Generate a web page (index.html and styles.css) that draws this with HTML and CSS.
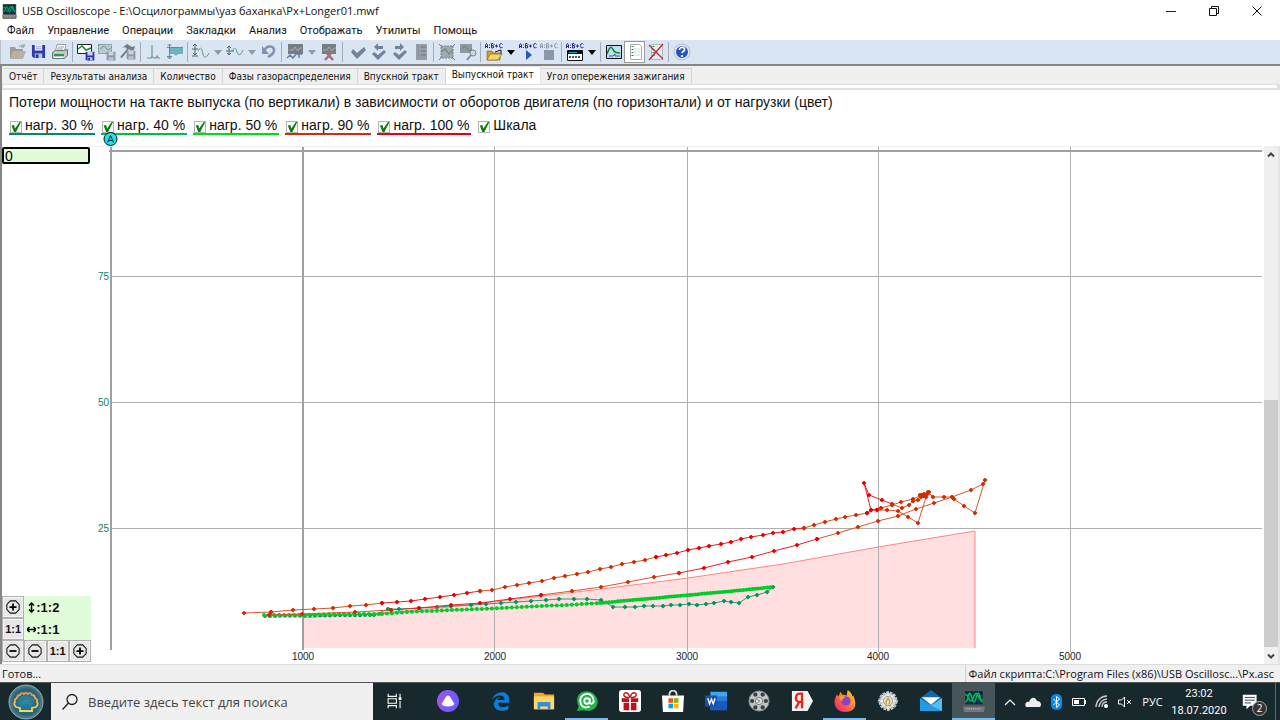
FILE: index.html
```html
<!DOCTYPE html>
<html lang="ru">
<head>
<meta charset="utf-8">
<title>USB Oscilloscope</title>
<link rel="stylesheet" href="styles.css">
</head>
<body>
<svg class="defs" width="0" height="0" aria-hidden="true">
  <symbol id="scope" viewBox="0 0 20 20">
    <path d="M1 0h18v15H1z" fill="#555"/><path d="M2 1h16v12H2z" fill="#03254c"/>
    <path d="M2 5h16M2 9h16M6 1v12M10 1v12M14 1v12" stroke="#24577b" stroke-width=".5"/>
    <path d="M2 11c3 0 2-8 4-8s2 8 4 8 2-8 4-8 1 8 4 8M2 4c3 0 3 6 5 6s3-7 5-7 2 7 6 6" fill="none" stroke="#00c34e" stroke-width="1.300"/>
    <path d="M0 15h20l-1 5H1z" fill="#777"/><path d="M3 17h14" stroke="#ccc" stroke-dasharray="1 1"/>
  </symbol>
  <symbol id="disk" viewBox="0 0 16 16">
    <path d="M1 1h14v14H3l-2-2z" fill="#2d3aa8"/><path d="M4 1h8v6H4z" fill="#e9efff"/><path d="M4 10h8v5H4z" fill="#b9c1e8"/><path d="M5 11h3v4H5z" fill="#2d3aa8"/><path d="M5 3h6M5 5h6" stroke="#9aa6dc"/>
  </symbol>
  <symbol id="disk-off" viewBox="0 0 16 16">
    <path d="M1 1h14v14H3l-2-2z" fill="#8e96a6"/><path d="M4 1h8v6H4z" fill="#ccd3df"/><path d="M4 10h8v5H4z" fill="#b9c1ce"/>
  </symbol>
  <symbol id="abc" viewBox="0 0 18 6">
    <path d="M.5 5V2l1-1.500 1 1.500v3M1 3.500h1.500M4.500 1.500v1M4.500 4v1M6.500.5v4.500h1.500l1-1-1-1.500 1-1-1-1H6.500M7 2.700h1.500M10 3h3M11.500 1.500v3M17.500 1.500l-1-1-1.500.5-.5 1.500.5 2 1.500.5 1-1" fill="none" stroke="currentColor"/>
  </symbol>
  <symbol id="plus" viewBox="0 0 16 16"><path d="M5 1h6l4 4v6l-4 4H5l-4-4V5z" fill="none" stroke="#111" stroke-width="1.200"/><path d="M4 8h8M8 4v8" stroke="#000" stroke-width="2"/></symbol>
  <symbol id="minus" viewBox="0 0 16 16"><path d="M5 1h6l4 4v6l-4 4H5l-4-4V5z" fill="none" stroke="#111" stroke-width="1.200"/><path d="M4 8h8" stroke="#000" stroke-width="2"/></symbol>
  <marker id="dot-orange" viewBox="0 0 6 6" refX="3" refY="3" markerWidth="5" markerHeight="5" markerUnits="userSpaceOnUse"><path d="M3 0l3 3-3 3-3-3z" fill="#d02c00"/></marker>
  <marker id="dot-red" viewBox="0 0 6 6" refX="3" refY="3" markerWidth="5" markerHeight="5" markerUnits="userSpaceOnUse"><path d="M3 0l3 3-3 3-3-3z" fill="#ea0000"/></marker>
  <marker id="dot-teal" viewBox="0 0 6 6" refX="3" refY="3" markerWidth="5" markerHeight="5" markerUnits="userSpaceOnUse"><path d="M3 0l3 3-3 3-3-3z" fill="#00965f"/></marker>
</svg>

<div class="window">
  <header class="titlebar">
    <svg class="app-icon" viewBox="0 0 20 20"><use href="#scope"/></svg>
    <h1 class="title">USB Oscilloscope - E:\Осцилограммы\уаз баханка\Px+Longer01.mwf</h1>
    <div class="window-buttons">
      <button aria-label="Свернуть"><svg viewBox="0 0 12 12"><path d="M1 6.500h10" stroke="#222"/></svg></button>
      <button aria-label="Восстановить"><svg viewBox="0 0 12 12"><path d="M1.500 3.500h7v7h-7zM3.500 3.500v-2h7v7h-2" fill="none" stroke="#111"/></svg></button>
      <button aria-label="Закрыть"><svg viewBox="0 0 12 12"><path d="M1.500 1.500l9 9M10.500 1.500l-9 9" stroke="#111"/></svg></button>
    </div>
  </header>

  <nav class="menu">
    <button>Файл</button><button>Управление</button><button>Операции</button><button>Закладки</button><button>Анализ</button><button>Отображать</button><button>Утилиты</button><button>Помощь</button>
  </nav>

  <div class="toolbar" role="toolbar">
    <button class="tool" aria-label="Открыть"><svg viewBox="0 0 18 18"><path d="M1 4h5l1 2h7v10H1z" fill="#a19c92"/><path d="M4 8h13l-3 8H1z" fill="#b7b1a6"/><path d="M10 4c2-3 4-2 5 0m0-3v3h-3" fill="none" stroke="#8a8f99"/></svg></button>
    <button class="tool" aria-label="Сохранить"><svg viewBox="0 0 18 18"><use href="#disk" x="1" y="1" width="15" height="15"/></svg></button>
    <button class="tool" aria-label="Печать"><svg viewBox="0 0 18 18"><path d="M6 1.500h9l-2 8H4z" fill="#fff" stroke="#99a"/><path d="M1.500 9.500l3-2h9l3-1v6l-3 3h-12z" fill="#c3c7c9" stroke="#6b747c"/><path d="M3 12h10" stroke="#2d9a3b" stroke-width="2"/><path d="M3 14.500h9" stroke="#fff"/><path d="M7 4h6M6 6h6" stroke="#8aa"/></svg></button>
    <span class="sep"></span>
    <button class="tool" aria-label="Сохранить участок"><svg viewBox="0 0 18 18"><path d="M.5 1.500h14v9H.5z" fill="#fff" stroke="#222"/><path d="M1 6l4-3 4 4 5-2" fill="none" stroke="#16883a" stroke-width="1.500"/><use href="#disk" x="8" y="8" width="10" height="10"/></svg></button>
    <button class="tool" aria-label="Сохранить выделенное"><svg viewBox="0 0 18 18"><path d="M.5 1.500h13v9H.5z" fill="#bdc7d2" stroke="#788" stroke-dasharray="2 1"/><path d="M2 6l4-3 4 4 3-2" fill="none" stroke="#6c9b87"/><use href="#disk-off" x="8" y="8" width="10" height="10"/></svg></button>
    <button class="tool" aria-label="Настроить"><svg viewBox="0 0 18 18"><path d="M3 5l5-4 5 3 3-1-1 4-3 1-2-2-7 9-2-1L8 6 6 4z" fill="#777c82"/><use href="#disk-off" x="7" y="7" width="10" height="10"/></svg></button>
    <span class="sep"></span>
    <button class="tool" aria-label="Пик"><svg viewBox="0 0 18 18"><path d="M2 15h4l1-1V2v12l2 1h2l1-2 1 2h2" fill="none" stroke="#679784" stroke-width="1.200"/></svg></button>
    <button class="tool" aria-label="Уровень"><svg viewBox="0 0 18 18"><path d="M3 5h14v6h-5l-2 2-2-2H3z" fill="#6db3b9"/><path d="M1 4.500h16M1 13.500h5M3.500 1v15M1.500 3l2-2 2 2M1.500 14l2 2 2-2" fill="none" stroke="#668c92"/></svg></button>
    <span class="sep"></span>
    <button class="tool" aria-label="Масштаб по вертикали"><svg viewBox="0 0 18 18"><path d="M3 1v11M1 3l2-2 2 2M1 10l2 2 2-2M0 6h6M0 13h6" fill="none" stroke="#54665f"/><path d="M6 8c3-6 4-1 5 3s3 5 6-1" fill="none" stroke="#659680"/></svg></button>
    <button class="drop off" aria-label="Ещё"></button>
    <button class="tool" aria-label="Сдвиг"><svg viewBox="0 0 18 18"><path d="M3 3v9M1 5l2-2 2 2M1 10l2 2 2-2M0 8h8" fill="none" stroke="#54665f"/><path d="M6 8c3-5 4-2 5 1s3 5 6-2" fill="none" stroke="#659680"/></svg></button>
    <button class="drop off" aria-label="Ещё"></button>
    <button class="tool" aria-label="Отменить"><svg viewBox="0 0 18 18"><path d="M4 8c3-7 11-5 10 0-1 4-4 5-6 6" fill="none" stroke="#8092ad" stroke-width="2.500"/><path d="M2 3v8h7z" fill="#8092ad"/></svg></button>
    <span class="sep"></span>
    <button class="tool" aria-label="Добавить сигнал"><svg viewBox="0 0 18 18"><path d="M2 1h15v10H2z" fill="#777d84"/><path d="M3 7h4l2-3 3 4 2-3h2" fill="none" stroke="#a0b4ad"/><path d="M1 15l3-3 3 3 3-4h6M13 9v6" fill="none" stroke="#657da9" stroke-width="1.500"/></svg></button>
    <button class="drop off" aria-label="Ещё"></button>
    <button class="tool" aria-label="Удалить сигнал"><svg viewBox="0 0 18 18"><path d="M2 1h14v10H2z" fill="#777d84"/><path d="M3 7h4l2-3 3 4 2-3h2" fill="none" stroke="#a0b4ad"/><path d="M5 8l8 9M13 8l-8 9" stroke="#a46e76" stroke-width="2.500"/></svg></button>
    <span class="sep grip"></span>
    <button class="tool" aria-label="Отметить"><svg viewBox="0 0 18 18"><path d="M2 9l2-3 4 4 7-6 2 3-9 9z" fill="#71829d"/></svg></button>
    <button class="tool" aria-label="Предыдущая отметка"><svg viewBox="0 0 18 18"><path d="M2 11l2-2 4 3 6-5 2 2-8 8zM4 4l4-4v3h5v3H8v2z" fill="#71829d"/></svg></button>
    <button class="tool" aria-label="Следующая отметка"><svg viewBox="0 0 18 18"><path d="M2 11l2-2 4 3 6-5 2 2-8 8zM13 4L9 0v3H4v3h5v2z" fill="#71829d"/></svg></button>
    <button class="tool" aria-label="Список отметок"><svg viewBox="0 0 18 18"><path d="M4 1h11v16H4z" fill="#969da7"/><path d="M6 4h1M6 8h1M6 12h1M9 4h5M9 8h5M9 12h5" stroke="#7a8592" stroke-width="1.500"/></svg></button>
    <span class="sep"></span>
    <button class="tool" aria-label="Выделить"><svg viewBox="0 0 18 18"><path d="M3 3h12v12H3z" fill="#a1a9b1" stroke="#788089" stroke-dasharray="2 1"/><path d="M1 1l3 3M17 1l-3 3M1 17l3-3M17 17l-3-3" stroke="#778"/><path d="M3 9l4-3 4 5 4-4" fill="none" stroke="#718f80" stroke-width="1.500"/></svg></button>
    <button class="tool" aria-label="Найти"><svg viewBox="0 0 18 18"><path d="M1 1h12v9H1z" fill="#90989f"/><path d="M2 6l4-3 4 5 3-2" fill="none" stroke="#66857a"/><circle cx="14" cy="10" r="3" fill="#cbd5e3" stroke="#778a9c"/><path d="M12 12l-4 5" stroke="#788a9c" stroke-width="2"/></svg></button>
    <span class="sep"></span>
    <button class="tool script" aria-label="Открыть скрипт"><svg viewBox="0 0 18 18"><use href="#abc" width="18" height="6"/><path d="M2 8h5l1 2h7v7H2z" fill="#d59f27" stroke="#8d6a1c" stroke-width=".7"/><path d="M5 11h12l-4 6H2z" fill="#f8d468" stroke="#8d6a1c" stroke-width=".7"/><path d="M10 9l6-2v4" fill="none" stroke="#111"/></svg></button>
    <button class="drop" aria-label="Ещё"></button>
    <button class="tool script" aria-label="Выполнить скрипт"><svg viewBox="0 0 18 18"><use href="#abc" width="18" height="6"/><path d="M7 7l6 5-6 5z" fill="#235bb8"/></svg></button>
    <button class="tool script script-off" aria-label="Остановить скрипт"><svg viewBox="0 0 18 18"><use href="#abc" width="18" height="6"/><path d="M4 7h10v10H4z" fill="#8b98ab"/></svg></button>
    <span class="sep"></span>
    <button class="tool script" aria-label="Панель анализа"><svg viewBox="0 0 18 18"><use href="#abc" width="18" height="6"/><path d="M1.500 7.500h15v10h-15z" fill="#fff" stroke="#111"/><path d="M2 8h14v3H2z" fill="#111"/><path d="M3 9.500h8" stroke="#1aa0d0"/><path d="M3 14h12" stroke="#555" stroke-width="2" stroke-dasharray="2 1"/></svg></button>
    <button class="drop" aria-label="Ещё"></button>
    <span class="sep"></span>
    <button class="tool" aria-label="Осциллограмма"><svg viewBox="0 0 18 18"><path d="M1.500 2.500h15v13h-15z" fill="#c3ddeb" stroke="#111"/><path d="M2 11c4-11 5-6 7-3s3 1 6 2" fill="none" stroke="#078443" stroke-width="1.500"/><path d="M4 13h4l2-2v2h5" fill="none" stroke="#225fb3"/></svg></button>
    <button class="tool pressed" aria-label="Отчёт"><svg viewBox="0 0 18 18"><path d="M4.500 1.500h9l2 2v13h-11z" fill="#fff" stroke="#aab"/><path d="M6.500 3v12" stroke="#26883b" stroke-width="2" stroke-dasharray="1 2"/><path d="M8 6h6M8 9h6M8 12h6" stroke="#cdd"/></svg></button>
    <button class="tool" aria-label="Закрыть отчёт"><svg viewBox="0 0 18 18"><path d="M4.500 1.500h11v15h-11z" fill="#e5edf2" stroke="#abb"/><path d="M6.500 3v12" stroke="#26883b" stroke-width="2" stroke-dasharray="1 2"/><path d="M2 2l14 14M16 1L2 17" stroke="#bb2835" stroke-width="1.300"/></svg></button>
    <span class="sep"></span>
    <button class="tool" aria-label="Справка"><svg viewBox="0 0 18 18"><circle cx="9" cy="9" r="7" fill="#2455be" stroke="#e5e9ef" stroke-width="2"/><circle cx="9" cy="9" r="8" fill="none" stroke="#8791a8" stroke-width=".5"/><path d="M6.500 7c0-4 6-3 5 0-1 2-2 1-2.500 3M9 12v2" fill="none" stroke="#fff" stroke-width="1.700"/></svg></button>
  </div>

  <main class="document">
    <div class="tabs" role="tablist">
      <button role="tab">Отчёт</button><button role="tab">Результаты анализа</button><button role="tab">Количество</button><button role="tab">Фазы газораспределения</button><button role="tab">Впускной тракт</button><button role="tab" class="active" aria-selected="true">Выпускной тракт</button><button role="tab">Угол опережения зажигания</button>
    </div>
    <div class="tab-edge"></div>
    <p class="caption">Потери мощности на такте выпуска (по вертикали) в зависимости от оборотов двигателя (по горизонтали) и от нагрузки (цвет)</p>
    <div class="legend">
      <label class="load-30"><input type="checkbox" checked>нагр. 30 %</label>
      <label class="load-40"><input type="checkbox" checked>нагр. 40 %</label>
      <label class="load-50"><input type="checkbox" checked>нагр. 50 %</label>
      <label class="load-90"><input type="checkbox" checked>нагр. 90 %</label>
      <label class="load-100"><input type="checkbox" checked>нагр. 100 %</label>
      <label class="scale"><input type="checkbox" checked>Шкала</label>
    </div>

    <section class="plot">
      <aside class="side">
        <input class="value" type="text" value="0" aria-label="Значение">
        <div class="zoom">
          <button aria-label="Увеличить по вертикали"><svg viewBox="0 0 16 16"><use href="#plus"/></svg></button>
          <output class="ratio"><svg viewBox="0 0 9 11"><path d="M4.500 1v9M2 3.500L4.500 1 7 3.500M2 7.500L4.500 10 7 7.500" fill="none" stroke="#000" stroke-width="1.500"/></svg>:1:2</output>
          <button>1:1</button>
          <output class="ratio"><svg viewBox="0 0 9 11"><path d="M0 5.500h9M2.500 3L0 5.500 2.500 8M6.500 3L9 5.500 6.500 8" fill="none" stroke="#000" stroke-width="1.500"/></svg>:1:1</output>
          <button aria-label="Уменьшить по вертикали"><svg viewBox="0 0 16 16"><use href="#minus"/></svg></button>
          <button aria-label="Уменьшить по горизонтали"><svg viewBox="0 0 16 16"><use href="#minus"/></svg></button>
          <button>1:1</button>
          <button aria-label="Увеличить по горизонтали"><svg viewBox="0 0 16 16"><use href="#plus"/></svg></button>
        </div>
      </aside>
      <svg class="chart" viewBox="91 146 1171 518" preserveAspectRatio="xMinYMin meet">
        <path d="M303 648V619L380 613 450 607 500 601 601 589 688 578 783 564 850 552 878 547 975 531V648z" fill="#ffdfdf"/>
        <path d="M303 618L330 616 380 613 450 607 500 601 601 589 688 578 783 564 850 552 878 547 975 531V648" fill="none" stroke="#ff8585"/>
        <g class="grid">
          <path class="thin" d="M111 276.500H1262M111 402.500H1262M111 528.500H1262M494.500 147V652M687.500 147V652M878.500 147V652M1070.500 147V652"/>
          <path class="thick" d="M109 151H1262M111 147V650M303 147V650"/>
          <path class="edge" d="M91 146.500H1262"/>
        </g>
        <g class="axis-x"><text x="303" y="660">1000</text><text x="495" y="660">2000</text><text x="687" y="660">3000</text><text x="878" y="660">4000</text><text x="1070" y="660">5000</text></g>
        <g class="axis-y"><text x="109" y="280">75</text><text x="109" y="406">50</text><text x="109" y="532">25</text></g>
        <polyline class="teal-dense" points="265,616 374,615"/>
        <polyline class="teal" points="374,615 388,609 399,609 419,608 437,607 451,606 471,605 486,604 501,603 516,602 531,601 546,600 559,599 574,599 587,599 601,600 613,607 625,607 635,607 644,606 653,606 663,606 671,605 680,605 689,604 697,605 706,604 714,603 724,601 731,602 739,603 748,597 757,595 767,592 773,587"/>
        <polyline class="green-dense" points="264,615 300,615 340,614 382,614"/>
        <polyline class="green-line" points="264,615 382,614 407,612 452,610 480,609 503,608 542,606 567,605 600,603 633,600 667,597 700,594 733,591 773,587"/>
        <polyline class="green-dots" points="382,614 407,612 452,610 480,609 503,608 542,606 567,605 600,603"/>
        <polyline class="green-solid" points="600,603 633,600 667,597 700,594 733,591 773,587"/>
        <polyline class="orange" points="244,613 271,612 293,610 314,609 333,608 350,606 366,605 382,603"/>
        <polyline class="red" points="382,603 397,602 411,601 425,599 440,597 454,595 467,593 480,591"/>
        <polyline class="orange" points="480,591 492,590 505,587 517,585 529,583 542,581 554,578 565,576 577,574 588,572 600,569 611,567 622,564 634,562 645,560 656,557"/>
        <polyline class="red" points="656,557 666,555 677,553 688,550 699,548 709,546 721,544 731,542 741,539 751,537 763,535 773,533 783,532 794,529 804,528"/>
        <polyline class="orange" points="804,528 814,525 825,522 836,519 845,517 856,515 867,513"/>
        <polyline class="red" points="867,513 871,510 881,508"/>
        <polyline class="orange" points="881,508 892,505 901,502 913,499 922,495 928,492 933,497 944,497 952,497 954,499 964,506 975,513 985,480 983,484 971,490 952,497 934,503 916,509 898,516 878,521 858,527 838,533 817,539"/>
        <polyline class="red" points="817,539 797,545 774,551 752,557 728,562 704,568 679,573"/>
        <polyline class="orange" points="679,573 654,577 628,582 601,587 572,591 541,595"/>
        <polyline class="red" points="541,595 510,599 480,603 451,605 419,608 391,610"/>
        <polyline class="orange" points="391,610 355,612 302,614 269,615 271,612"/>
        <polyline class="orange" points="922,495 926,497 918,523 908,517 898,511 887,510 877,510"/>
        <polyline class="red" points="877,510 871,510 864,483 869,495 882,500 892,504"/>
        <polyline class="orange" points="892,504 902,508 909,505 913,501 918,500 920,495 921,497 924,494 927,494 929,492"/>
        <path d="M919 495h6l3-4h2v3l-5 4h-4z" fill="#d02c00"/>
        <circle cx="110.500" cy="139" r="6.500" fill="#19e4ee" stroke="#111"/>
        <path d="M107.500 142.500l3-7 3 7M109 140.500h3" fill="none" stroke="#111"/>
      </svg>
      <div class="scrollbar">
        <button aria-label="Вверх"><svg viewBox="0 0 8 8"><path d="M1 5.500l3-3 3 3" fill="none" stroke="#444" stroke-width="2"/></svg></button>
        <div class="track"><div class="thumb"></div></div>
        <button aria-label="Вниз"><svg viewBox="0 0 8 8"><path d="M1 2.500l3 3 3-3" fill="none" stroke="#444" stroke-width="2"/></svg></button>
      </div>
    </section>
  </main>

  <footer class="status"><span>Готов...</span><span class="script-path">Файл скрипта:C:\Program Files (x86)\USB Oscillosc...\Px.asc</span></footer>
</div>

<div class="taskbar">
  <button class="start" aria-label="Пуск"><svg viewBox="0 0 36 36"><defs><radialGradient id="glass"><stop offset="0" stop-color="#2889a2"/><stop offset=".75" stop-color="#28617a"/><stop offset="1" stop-color="#5b8792"/></radialGradient><linearGradient id="shell" gradientUnits="userSpaceOnUse" x1="0" y1="8" x2="0" y2="28"><stop offset="0" stop-color="#f18b48"/><stop offset="1" stop-color="#f0e05a"/></linearGradient></defs><circle cx="18" cy="18" r="17" fill="url(#glass)" stroke="#8caeb4"/><path d="M13 23v-3q5-3 10 0v3M11 20q7-8 14 0M10 17q8-8 16 0" fill="none" stroke="#3d8a9c" stroke-width=".7"/><path d="M12 27v-3l-4-1q-3-3-1-5-1-3 2-4 0-3 3-3 1-3 4-1 2-2 4 0 3-2 4 1 3 0 3 3 3 1 2 4 2 2-1 5l-4 1v3z" fill="none" stroke="url(#shell)" stroke-width="1.800"/></svg></button>
  <label class="search"><svg viewBox="0 0 18 18"><circle cx="11" cy="6.500" r="5" fill="none" stroke="#222" stroke-width="1.300"/><path d="M7.500 10L1.500 16.500" stroke="#222" stroke-width="1.300"/></svg><input type="text" placeholder="Введите здесь текст для поиска" aria-label="Поиск"></label>
  <div class="apps">
    <button aria-label="Просмотр задач"><svg viewBox="0 0 24 24"><path d="M4.500 4v3h9V4M4.500 20v-3h9v3M4.500 9.500h9v5h-9zM17.500 4v5M17.500 12v8" fill="none" stroke="#fff" stroke-width="1.200"/><path d="M16 8h3v3h-3z" fill="#fff"/></svg></button>
    <button class="alice" aria-label="Алиса"><svg viewBox="0 0 24 24"><defs><linearGradient id="violet" x2="1"><stop stop-color="#9c55f4"/><stop offset="1" stop-color="#655cff"/></linearGradient></defs><circle cx="12" cy="12" r="12" fill="url(#violet)"/><path d="M10 7q2-2 4 0l5 8q-1 3-7 3t-7-3z" fill="#fff"/></svg></button>
    <button aria-label="Edge"><svg viewBox="0 0 24 24"><path d="M2 11C4 2 18-2 21 9v5H9c0 7 8 5 11 3v4C10 26 0 19 6 11c2-3 4-3 5-3-3 1-3 3-3 3h8c0-7-10-6-14 0z" fill="#0d7cdc"/></svg></button>
    <button aria-label="Проводник"><svg viewBox="0 0 24 24"><path d="M1 3h10l2 2h10v16H1z" fill="#eda52d"/><path d="M1 7h22v14H1z" fill="#ffd669"/><path d="M5 13h14v8h-3v-3H8v3H5z" fill="#358ddd"/></svg></button>
    <button class="running" aria-label="Почта Агент"><svg viewBox="0 0 24 24"><path d="M3 18C-4 3 12-3 20 5s2 21-12 17l-7 1z" fill="#24b24b"/><circle cx="12" cy="12" r="3" fill="none" stroke="#fff" stroke-width="2"/><path d="M15 9v5c3 3 5-1 4-4-2-10-17-6-14 4 1 5 6 6 10 4" fill="none" stroke="#fff" stroke-width="2"/></svg></button>
    <button aria-label="Подарки"><svg viewBox="0 0 24 24"><rect width="24" height="24" rx="3" fill="#fff"/><path d="M3 9h18v4H3zM5 14h14v8H5z" fill="#bf1118"/><path d="M12 8v14" stroke="#fff" stroke-width="2"/><path d="M11 8C2 9 5 0 10 4l2 4 2-4c5-4 8 5-1 4" fill="none" stroke="#bf1118" stroke-width="1.500"/></svg></button>
    <button aria-label="Магазин"><svg viewBox="0 0 24 24"><path d="M8 6c0-7 8-7 8 0" fill="none" stroke="#ddd" stroke-width="2"/><path d="M0 6h24l-1 18H1z" fill="#fff"/><path d="M7 9h5v5H7z" fill="#f25022"/><path d="M13 9h5v5h-5z" fill="#7fba00"/><path d="M7 15h5v5H7z" fill="#00a4ef"/><path d="M13 15h5v5h-5z" fill="#ffb900"/></svg></button>
    <button aria-label="Word"><svg viewBox="0 0 24 24"><path d="M6 2h18v20H6z" fill="#2b7cd3"/><path d="M6 2h18v5H6z" fill="#41a5ee"/><path d="M6 12h18v10H6z" fill="#185abd"/><path d="M0 6h13v12H0z" fill="#1751ad"/><path d="M3 9l2 6 2-5 2 5 2-6" fill="none" stroke="#fff" stroke-width="1.500"/></svg></button>
    <button aria-label="Видео"><svg viewBox="0 0 24 24"><circle cx="12" cy="12" r="11" fill="#bfc3c5" stroke="#85898a"/><g fill="#383f42"><circle cx="8" cy="5" r="2.300"/><circle cx="16" cy="5" r="2.300"/><circle cx="4.500" cy="12" r="2.300"/><circle cx="19.500" cy="12" r="2.300"/><circle cx="8" cy="19" r="2.300"/><circle cx="16" cy="19" r="2.300"/></g><circle cx="12" cy="12" r="4" fill="#ddd" stroke="#777"/><path d="M10 10l3 2-3 2" fill="none" stroke="#777"/></svg></button>
    <button aria-label="Яндекс"><svg viewBox="0 0 24 24"><path d="M1 1h17l6 11-6 11H1z" fill="#f2f2f2"/><path d="M12 20V4h-2c-6 0-6 9-1 9h3M9 13l-4 7" fill="none" stroke="#e52620" stroke-width="2.500"/></svg></button>
    <button class="running" aria-label="Firefox"><svg viewBox="0 0 24 24"><defs><linearGradient id="fox" x1="1" x2="0" y2="1"><stop stop-color="#ffe226"/><stop offset=".5" stop-color="#ff7139"/><stop offset="1" stop-color="#e31587"/></linearGradient></defs><path d="M1 10l2-5 2 2 2-5 2 3 5 1c0-3 1-5 1-6 3 2 5 5 5 7l1-1c6 14-1 18-9 18S-1 18 1 10z" fill="url(#fox)"/><circle cx="13" cy="12" r="5" fill="#8443cc"/><path d="M6 7c3-1 5 0 6 2-3 0-3 2-3 3-3-1-3-3-3-5z" fill="#ff9838"/></svg></button>
    <button aria-label="Диагностика"><svg viewBox="0 0 24 24"><circle cx="12" cy="12" r="9" fill="#ddd" stroke="#bbb" stroke-width="3" stroke-dasharray="3 1"/><path d="M1 12h22M12 1v22M5 5l14 14M19 5L5 19" stroke="#fff"/><circle cx="12" cy="12" r="5" fill="#e5e2d3" stroke="#999"/><path d="M10 16v-4l2-3 2 3-1 4M9 17h6" fill="none" stroke="#c4a640" stroke-width="1.500"/></svg></button>
    <button aria-label="Почта"><svg viewBox="0 0 24 24"><path d="M0 9L12 0l12 9v14H0z" fill="#1267ae"/><path d="M2 8h20L12 16z" fill="#fff"/><path d="M0 9l12 8 12-8v14H0z" fill="#229be2"/><path d="M12 17l12-8v14z" fill="#53bff0"/></svg></button>
    <button class="running current" aria-label="USB Oscilloscope"><svg viewBox="0 0 20 20"><use href="#scope"/></svg></button>
  </div>
  <div class="tray">
    <button aria-label="Скрытые значки"><svg viewBox="0 0 16 16"><path d="M3 11l5-5 5 5" fill="none" stroke="#fff" stroke-width="1.200"/></svg></button>
    <button aria-label="OneDrive"><svg viewBox="0 0 16 16"><path d="M1 13c-2-4 1-6 3-5C6 2 11 3 12 7c4 0 5 4 3 6z" fill="#eee"/></svg></button>
    <button aria-label="Bluetooth"><svg viewBox="0 0 16 16"><rect x="3" width="11" height="16" rx="5" fill="#0789ef"/><path d="M5.500 5l6 6-3 2.500v-11l3 2.500-6 6" fill="none" stroke="#fff"/></svg></button>
    <button aria-label="Батарея"><svg viewBox="0 0 16 16"><path d="M1.500 4.500h12v7h-12zM14.500 6v4" fill="none" stroke="#fff"/><path d="M3 6h5v4H3z" fill="#fff"/></svg></button>
    <button aria-label="Сеть"><svg viewBox="0 0 16 16"><path d="M2 13C2 7 7 2 13 2M5 13c0-4 4-8 8-8M8 13c0-3 2-5 5-5" fill="none" stroke="#ccc" stroke-width="1.300"/><circle cx="12" cy="12" r="2" fill="#fff"/></svg></button>
    <button aria-label="Звук выключен"><svg viewBox="0 0 16 16"><path d="M1.500 6h3l3-3v10l-3-3h-3zM10 6l4 4M14 6l-4 4" fill="none" stroke="#fff"/></svg></button>
    <button class="lang">РУС</button>
    <button class="clock"><time>23:02</time><time>18.07.2020</time></button>
    <button class="notices" aria-label="Уведомления"><svg viewBox="0 0 24 24"><path d="M2 4h15v12h-7l-4 4v-4H2z" fill="#fff"/><path d="M4 7h11M4 10h11M4 13h7" stroke="#26343a"/></svg><span class="badge">2</span></button>
    <span class="show-desktop"></span>
  </div>
</div>
</body>
</html>
```

FILE: styles.css
```css
* { box-sizing: border-box; }
body {
  margin: 0;
  height: 100vh;
  display: flex;
  flex-direction: column;
  overflow: hidden;
  background: #fff;
  color: #111;
  font: 11px "Open Sans", "Noto Sans", sans-serif;
}
button { margin: 0; padding: 0; border: 0; background: none; color: inherit; font: inherit; }
svg { display: block; }
.defs { position: absolute; }

.window { flex: 1; min-height: 0; display: flex; flex-direction: column; }
.titlebar { height: 22px; display: flex; align-items: center; padding: 0 2px; }
.app-icon { width: 15px; height: 15px; }
.title { margin: 0 0 0 5px; flex: 1; font-size: 11px; font-weight: 400; line-height: 20px; white-space: nowrap; }
.window-buttons { display: flex; }
.window-buttons button { width: 43px; height: 20px; display: grid; place-items: center; }
.window-buttons svg { width: 12px; height: 12px; }

.menu { display: flex; gap: 13px; height: 18px; padding-left: 7px; font: 11px/18px Roboto, sans-serif; }

.toolbar { height: 24px; display: flex; align-items: center; padding-left: 6px; background: #dae5f4; border-left: 1px solid #b8c2d0; }
.tool { width: 21px; height: 22px; display: grid; place-items: center; }
.tool svg { width: 18px; height: 18px; }
.script { color: #20308c; }
.script-off { color: #8b98ab; }
.pressed { background: #fff; border: 1px solid #999; }
.drop { width: 13px; height: 22px; display: grid; place-items: center; color: #000; }
.drop::before { content: ""; border: 4px solid transparent; border-top: 5px solid; border-bottom: 0; }
.drop.off { color: #929aa8; }
.sep { width: 1px; height: 20px; margin: 0 2px; background: #a5adb8; }
.sep.grip { margin: 0 4px 0 3px; }

.document { flex: 1; min-height: 0; display: flex; flex-direction: column; border: solid #868686; border-width: 2px 0 0 2px; }
.tabs { height: 18px; display: flex; align-items: flex-end; background: #efefef; padding-left: 1px; font: 10px "DejaVu Sans Condensed", "Liberation Sans", sans-serif; }
.tabs button { height: 16px; padding: 0 6px; border: solid #d6d6d6; border-width: 1px 1px 0 0; white-space: nowrap; }
.tabs .active { height: 18px; padding-bottom: 3px; background: #fff; border-color: #e4e4e4; }
.tab-edge { height: 6px; border: solid #e0e0e0; border-width: 1px 3px 2px 1px; }
.caption, .legend { font: 14px/18px "Liberation Sans", sans-serif; }
.caption { margin: 0; padding: 3px 0 0 7px; white-space: nowrap; }
.legend { display: flex; gap: 6px; padding: 7px 0 11px 7px; line-height: 15px; }
.legend label { display: flex; align-items: center; padding-right: 2px; border-bottom: 2px solid; border-color: transparent; white-space: nowrap; }
.legend input { appearance: none; width: 12px; height: 12px; margin: 3px 3px 0 1px; border: 1px solid #b5b5b5; background: #fff; }
.legend input:checked::after { content: ""; display: block; width: 10px; height: 10px; background: #078007; clip-path: polygon(5% 35%, 30% 30%, 40% 65%, 85% 0, 100% 0, 50% 100%, 30% 100%); }
.legend .load-30 { border-color: #00896a; }
.legend .load-40 { border-color: #00bf45; }
.legend .load-50 { border-color: #00de16; }
.legend .load-90 { border-color: #cf2d13; }
.legend .load-100 { border-color: #e80012; }

.plot { flex: 1; min-height: 0; display: flex; }
.side { width: 89px; display: flex; flex-direction: column; justify-content: space-between; padding: 1px 0 2px; }
.value { width: 88px; height: 17px; padding: 0 1px; border: 2px solid #000; border-radius: 2px; background: #e0fcd9; font: 14px "Liberation Sans", sans-serif; }
.zoom { display: grid; grid-template-columns: repeat(4, 1fr); background: #e0fcd9; }
.zoom button { height: 22px; display: grid; place-items: center; background: #e7e7e7; border: 1px solid #b2b2b2; box-shadow: inset 0 0 0 1px #f4f4f4; font: bold 11px "Liberation Sans", sans-serif; }
.zoom button svg { width: 14px; height: 14px; }
.ratio { grid-column: span 3; display: flex; align-items: center; padding-left: 3px; font: bold 13px "Liberation Sans", sans-serif; }
.ratio svg { width: 9px; height: 11px; }
.chart { flex: 1; min-width: 0; height: 100%; overflow: visible; font: 10px "Liberation Sans", sans-serif; }
.thin { stroke: #afafaf; }
.thick { stroke: #a0a0a0; stroke-width: 2px; }
.edge { stroke: #eee; }
.axis-x { text-anchor: middle; fill: #222; }
.axis-y { text-anchor: end; fill: #078267; }
polyline { fill: none; stroke-width: 1px; }
.orange { stroke: #d6572a; marker: url(#dot-orange); }
.red { stroke: #ec2020; marker: url(#dot-red); }
.teal { stroke: #279f77; marker: url(#dot-teal); }
.teal-dense { stroke: #00965f; stroke-width: 4px; stroke-linecap: round; stroke-dasharray: 0 5; }
.green-line { stroke: #00cb29; }
.green-dense, .green-dots { stroke: #00cb29; stroke-width: 4px; stroke-linecap: round; stroke-dasharray: 0 5; }
.green-solid { stroke: #00cb29; stroke-width: 4px; stroke-linecap: round; stroke-dasharray: 0 3; }
.scrollbar { width: 16px; display: flex; flex-direction: column; background: #f0f0f0; border-right: 2px solid #e4e4e4; }
.scrollbar button { height: 17px; display: grid; place-items: center; }
.scrollbar svg { width: 8px; height: 8px; }
.track { flex: 1; display: flex; align-items: flex-end; }
.thumb { width: 100%; height: 51%; background: #cdcdcd; }

.status { height: 18px; display: flex; justify-content: space-between; background: #f0f0f0; border-top: 1px solid #ddd; line-height: 18px; padding-left: 2px; }
.script-path { padding: 0 6px 0 3px; border-left: 1px solid #d0d0d0; }

.taskbar { height: 38px; display: flex; background: #18292d; border-top: 1px solid #555; color: #fff; }
.start { width: 51px; display: grid; place-items: center; }
.start svg { width: 36px; height: 36px; }
.search { width: 322px; flex: 0 1 auto; display: flex; align-items: center; background: #f0f0f0; color: #333; padding-left: 10px; }
.search svg { width: 18px; height: 18px; flex: none; }
.search input { min-width: 0; flex: 1; margin-left: 9px; padding: 0; border: 0; background: none; font: 13px "Open Sans", "Noto Sans", sans-serif; }
.search input::placeholder { color: #444; opacity: 1; }
.apps { display: flex; }
.apps button { width: 43px; display: grid; place-items: center; border-bottom: 2px solid transparent; }
.apps .alice { width: 63px; }
.apps svg { width: 22px; height: 22px; }
.apps .running { border-color: #76b9ed; background-clip: padding-box; }
.apps .current { background-color: #46555a; }
.tray { flex: 1; display: flex; justify-content: flex-end; align-items: stretch; }
.tray > button { width: 23px; display: grid; place-items: center; }
.tray svg { width: 16px; height: 16px; }
.tray .lang { width: 33px; font-size: 11px; }
.tray .clock { width: 60px; align-content: center; font: 11px/17px Roboto, sans-serif; }
.tray .notices { position: relative; width: 46px; }
.tray .notices svg { width: 22px; height: 22px; }
.badge { position: absolute; right: 8px; bottom: 4px; width: 15px; height: 15px; border: 1px solid #aaa; border-radius: 50%; background: #333; font-size: 10px; line-height: 13px; text-align: center; }
.show-desktop { width: 5px; border-left: 1px solid #5c696d; }
```
